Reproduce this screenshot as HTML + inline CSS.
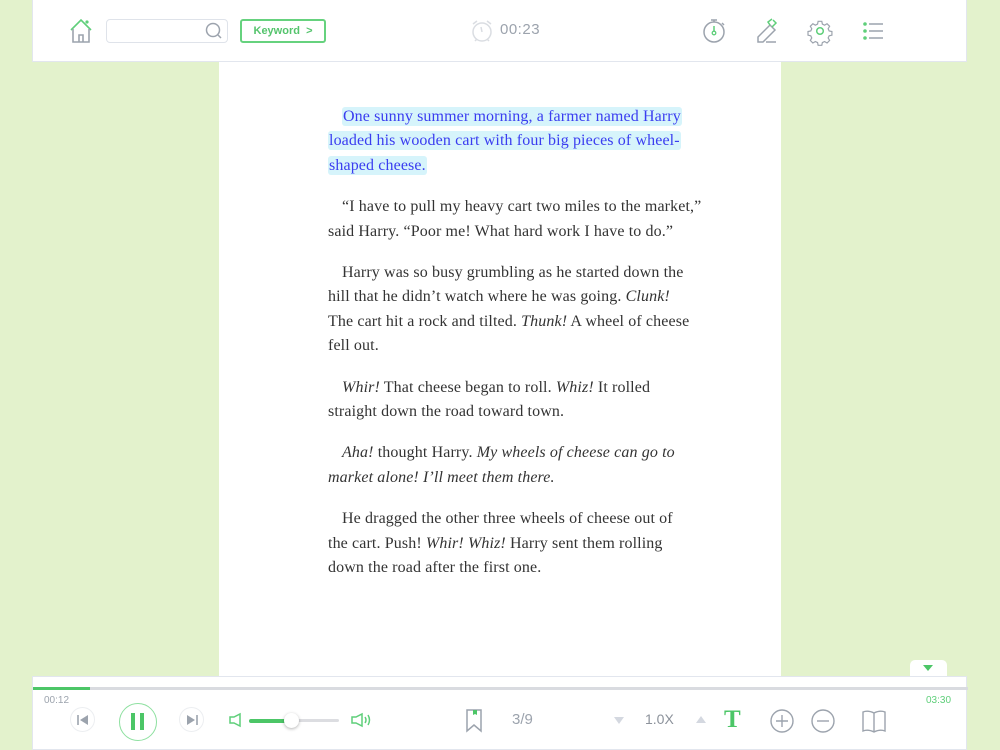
<!DOCTYPE html>
<html><head><meta charset="utf-8"><style>
*{margin:0;padding:0;box-sizing:border-box}
body{width:1000px;height:750px;background:#e3f2cc;position:relative;overflow:hidden;font-family:"Liberation Sans",sans-serif}
.top{position:absolute;left:32px;top:0;width:935px;height:62px;background:#fff;border:1px solid #e2e6ee;border-top:none}
.page{position:absolute;left:219px;top:62px;width:562px;height:614px;background:#fff}
.text{position:absolute;left:109px;top:43px;width:400px;font-family:"Liberation Serif",serif;font-size:16px;letter-spacing:0.12px;line-height:24.4px;color:#333;white-space:nowrap}
.text p{text-indent:14px;margin-bottom:17px}
.hl{background:#d6f4fb;color:#3a3df0;border-radius:3px;padding:1px 1px;box-decoration-break:clone;-webkit-box-decoration-break:clone}
.bot{position:absolute;left:32px;top:676px;width:935px;height:74px;background:#fff;border:1px solid #e2e6ee}
svg{position:absolute;overflow:visible}
.abs{position:absolute}
</style></head><body>
<div class="top">
 <svg style="left:36px;top:18px" width="24" height="26" viewBox="0 0 24 26"><path d="M2 12 L12 2 L22 12" fill="none" stroke="#5fcf7a" stroke-width="1.6"/><path d="M4 11 V24 H20 V11 M10 24 V17 H14 V24" fill="none" stroke="#9ca3ad" stroke-width="1.6"/><circle cx="18" cy="4" r="1.6" fill="#5fcf7a"/></svg>
 <div class="abs" style="left:73px;top:19px;width:122px;height:24px;border:1px solid #dfe3ea;border-radius:4px"></div>
 <svg style="left:172px;top:22px" width="18" height="18"><circle cx="8" cy="8" r="6.5" fill="none" stroke="#9ca3ad" stroke-width="1.5"/><path d="M13 13 L16 16" stroke="#9ca3ad" stroke-width="1.5"/></svg>
 <div class="abs" style="left:207px;top:19px;width:86px;height:24px;border:2px solid #66d27e;border-radius:3px;color:#55c46d;font-size:11px;font-weight:bold;text-align:center;line-height:20px">Keyword &nbsp;&gt;</div>
 <svg style="left:437px;top:19px" width="24" height="24"><circle cx="12" cy="13" r="9" fill="none" stroke="#dadde2" stroke-width="1.5"/><path d="M3 5 L7 2 M21 5 L17 2 M12 13 L11 8 M5 22 L7 20 M19 22 L17 20" stroke="#dadde2" stroke-width="1.5" fill="none"/></svg>
 <div class="abs" style="left:467px;top:21px;font-size:15px;color:#9ca3ad;letter-spacing:.5px">00:23</div>
 <svg style="left:669px;top:18px" width="24" height="26"><circle cx="12" cy="14" r="10" fill="none" stroke="#9ca3ad" stroke-width="1.5"/><path d="M9 2 H15 M12 2 V4 M20 5 L22 7" stroke="#9ca3ad" stroke-width="1.5"/><path d="M12 8 V14" stroke="#5fcf7a" stroke-width="1.5"/><circle cx="12" cy="15" r="1.8" fill="none" stroke="#5fcf7a" stroke-width="1.3"/></svg>
 <svg style="left:721px;top:18px" width="26" height="26"><path d="M4 19 L16 7 L21 12 L9 24 H4 Z" fill="none" stroke="#9ca3ad" stroke-width="1.5"/><path d="M12 24 H22" stroke="#9ca3ad" stroke-width="1.5"/><path d="M16 7 L14 4 L18 1 M18 9 L22 5 L19 2" fill="none" stroke="#5fcf7a" stroke-width="1.5"/></svg>
 <svg style="left:775px;top:19px" width="24" height="24" viewBox="0 0 24 24"><path d="M10 1.5h4l.6 3 2.4 1.2 2.7-1.6 2.8 2.8-1.6 2.7 1.1 2.4 3 .6v4l-3 .6-1.1 2.4 1.6 2.7-2.8 2.8-2.7-1.6-2.4 1.1-.6 3h-4l-.6-3-2.4-1.1-2.7 1.6-2.8-2.8 1.6-2.7-1.1-2.4-3-.6v-4l3-.6 1.1-2.4-1.6-2.7 2.8-2.8 2.7 1.6 2.4-1.2z" fill="none" stroke="#9ca3ad" stroke-width="1.3" transform="scale(.92) translate(1 1)"/><circle cx="12" cy="12" r="3.3" fill="none" stroke="#5fcf7a" stroke-width="1.5"/></svg>
 <svg style="left:830px;top:21px" width="20" height="20"><circle cx="2" cy="3" r="1.8" fill="#5fcf7a"/><circle cx="2" cy="10" r="1.8" fill="#5fcf7a"/><circle cx="2" cy="17" r="1.8" fill="#5fcf7a"/><path d="M6 3 H20 M6 10 H20 M6 17 H20" stroke="#9ca3ad" stroke-width="1.6"/></svg>
</div>
<div class="page"><div class="text">
<p><span class="hl">One sunny summer morning, a farmer named Harry<br>loaded his wooden cart with four big pieces of wheel-<br>shaped cheese.</span></p>
<p>“I have to pull my heavy cart two miles to the market,”<br>said Harry. “Poor me! What hard work I have to do.”</p>
<p>Harry was so busy grumbling as he started down the<br>hill that he didn’t watch where he was going. <i>Clunk!</i><br>The cart hit a rock and tilted. <i>Thunk!</i> A wheel of cheese<br>fell out.</p>
<p><i>Whir!</i> That cheese began to roll. <i>Whiz!</i> It rolled<br>straight down the road toward town.</p>
<p><i>Aha!</i> thought Harry. <i>My wheels of cheese can go to<br>market alone! I’ll meet them there.</i></p>
<p>He dragged the other three wheels of cheese out of<br>the cart. Push! <i>Whir! Whiz!</i> Harry sent them rolling<br>down the road after the first one.</p>
</div></div>
<div class="abs" style="left:910px;top:660px;width:37px;height:16px;background:#fff;border-radius:5px 5px 0 0"><svg style="left:13px;top:5px" width="10" height="6"><path d="M0 0 H10 L5 6Z" fill="#4cc667"/></svg></div>
<div class="bot">
 <div class="abs" style="left:0;top:10px;width:935px;height:3px;background:#d9dbe0"></div>
 <div class="abs" style="left:0;top:10px;width:57px;height:3px;background:#4cc667"></div>
 <div class="abs" style="left:11px;top:18px;font-size:10px;color:#9ca3ad">00:12</div>
 <div class="abs" style="left:893px;top:18px;font-size:10px;color:#5fcf7a">03:30</div>
 <div class="abs" style="left:37px;top:30px;width:25px;height:25px;border:1px solid #eceef1;border-radius:50%"></div>
 <svg style="left:44px;top:37px" width="12" height="12"><path d="M1 1 V11" stroke="#9ca3ad" stroke-width="1.6"/><path d="M11 1 V11 L3 6Z" fill="#9ca3ad"/></svg>
 <div class="abs" style="left:86px;top:26px;width:38px;height:38px;border:1.5px solid #8ee0a0;border-radius:50%"></div>
 <div class="abs" style="left:98px;top:36px;width:4px;height:17px;background:#4cc667"></div>
 <div class="abs" style="left:107px;top:36px;width:4px;height:17px;background:#4cc667"></div>
 <div class="abs" style="left:146px;top:30px;width:25px;height:25px;border:1px solid #eceef1;border-radius:50%"></div>
 <svg style="left:153px;top:37px" width="12" height="12"><path d="M11 1 V11" stroke="#9ca3ad" stroke-width="1.6"/><path d="M1 1 V11 L9 6Z" fill="#9ca3ad"/></svg>
 <svg style="left:196px;top:36px" width="14" height="14"><path d="M1 4 H5 L11 1 V13 L5 10 H1Z" fill="none" stroke="#5fcf7a" stroke-width="1.5"/></svg>
 <div class="abs" style="left:216px;top:42px;width:44px;height:4px;background:#4cc667;border-radius:2px"></div>
 <div class="abs" style="left:258px;top:42px;width:48px;height:3px;background:#dcdde1;border-radius:2px"></div>
 <div class="abs" style="left:251px;top:36px;width:15px;height:15px;background:#fff;border-radius:50%;box-shadow:0 1px 3px rgba(0,0,0,.3)"></div>
 <svg style="left:318px;top:36px" width="20" height="14"><path d="M1 4 H5 L11 1 V13 L5 10 H1Z" fill="none" stroke="#5fcf7a" stroke-width="1.5"/><path d="M14 4 Q16 7 14 10 M17 2 Q20 7 17 12" fill="none" stroke="#5fcf7a" stroke-width="1.5"/></svg>
 <svg style="left:433px;top:32px" width="16" height="24"><path d="M1 1 H15 V22 L8 16 L1 22Z" fill="none" stroke="#9ca3ad" stroke-width="1.5"/><path d="M7 1 H11 V6 L9 5 L7 6Z" fill="#4cc667"/></svg>
 <div class="abs" style="left:479px;top:34px;font-size:15px;color:#9ca3ad">3/9</div>
 <svg style="left:581px;top:40px" width="10" height="7"><path d="M0 0H10L5 7Z" fill="#d4d8e0"/></svg>
 <div class="abs" style="left:612px;top:34px;font-size:14px;color:#8c929b">1.0X</div>
 <svg style="left:663px;top:39px" width="10" height="7"><path d="M0 7H10L5 0Z" fill="#d4d8e0"/></svg>
 <div class="abs" style="left:691px;top:29px;font-family:'Liberation Serif',serif;font-size:25px;font-weight:bold;color:#4cc667">T</div>
 <svg style="left:737px;top:32px" width="24" height="24"><circle cx="12" cy="12" r="11" fill="none" stroke="#9ca3ad" stroke-width="1.4"/><path d="M12 6V18M6 12H18" stroke="#9ca3ad" stroke-width="1.4"/></svg>
 <svg style="left:778px;top:32px" width="24" height="24"><circle cx="12" cy="12" r="11" fill="none" stroke="#9ca3ad" stroke-width="1.4"/><path d="M6 12H18" stroke="#9ca3ad" stroke-width="1.4"/></svg>
 <svg style="left:829px;top:32px" width="24" height="24"><path d="M1 3 Q6 1 12 4 Q18 1 23 3 V22 Q18 20 12 23 Q6 20 1 22Z M12 4V23" fill="none" stroke="#9ca3ad" stroke-width="1.4"/></svg>
</div>
</body></html>
